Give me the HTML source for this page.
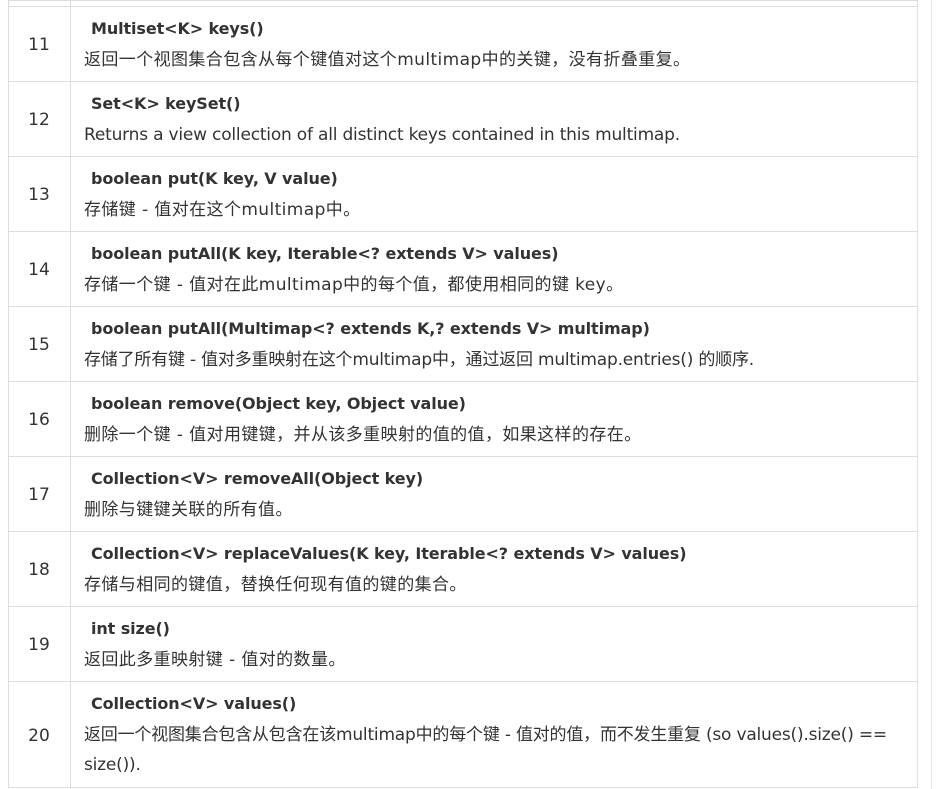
<!DOCTYPE html>
<html><head><meta charset="utf-8"><style>
body{margin:0;background:#fff;width:936px;height:789px;overflow:hidden;position:relative;font-family:"DejaVu Sans","Noto Sans CJK SC",sans-serif;color:#333;font-size:17px}
.r{position:absolute;left:8px;width:910px;border-top:1px solid #ddd;box-sizing:border-box}
.n{position:absolute;left:0;width:62px;text-align:center;top:0;bottom:0;display:flex;align-items:center;justify-content:center;font-size:17px;padding-top:2px;box-sizing:border-box}
.c{position:absolute;left:62px;right:0;top:0;bottom:0;border-left:1px solid #ddd;padding:7px 10px 0 13px;line-height:30.5px;letter-spacing:-0.2px}
.c b{padding-left:7px;color:#333;letter-spacing:-0.1px;font-size:16px}
.edge{position:absolute;left:8px;top:0;width:910px;height:788px;border-left:1px solid #ddd;border-right:1px solid #ddd;border-bottom:1px solid #ddd;box-sizing:border-box}
.sb{position:absolute;left:931px;top:0;width:1px;height:789px;background:#e5e5e5}
.k{letter-spacing:0.4px}
</style></head><body>
<div class="edge"></div><div class="sb"></div>
<div class="r" style="top:0;height:6px"><div class="c" style="padding:0"></div></div>
<div class="r" style="top:6px;height:75px"><div class="n">11</div><div class="c"><b>Multiset&lt;K&gt; keys()</b><br><span class="k">返回一个视图集合包含从每个键值对这个multimap中的关键，没有折叠重复。</span></div></div>
<div class="r" style="top:81px;height:75px"><div class="n">12</div><div class="c"><b>Set&lt;K&gt; keySet()</b><br>Returns a view collection of all distinct keys contained in this multimap.</div></div>
<div class="r" style="top:156px;height:75px"><div class="n">13</div><div class="c"><b>boolean put(K key, V value)</b><br><span class="k">存储键 - 值对在这个multimap中。</span></div></div>
<div class="r" style="top:231px;height:75px"><div class="n">14</div><div class="c"><b>boolean putAll(K key, Iterable&lt;? extends V&gt; values)</b><br><span class="k">存储一个键 - 值对在此multimap中的每个值，都使用相同的键 key。</span></div></div>
<div class="r" style="top:306px;height:75px"><div class="n">15</div><div class="c"><b>boolean putAll(Multimap&lt;? extends K,? extends V&gt; multimap)</b><br>存储了所有键 - 值对多重映射在这个multimap中，通过返回 multimap.entries() 的顺序.</div></div>
<div class="r" style="top:381px;height:75px"><div class="n">16</div><div class="c"><b>boolean remove(Object key, Object value)</b><br><span class="k">删除一个键 - 值对用键键，并从该多重映射的值的值，如果这样的存在。</span></div></div>
<div class="r" style="top:456px;height:75px"><div class="n">17</div><div class="c"><b>Collection&lt;V&gt; removeAll(Object key)</b><br><span class="k">删除与键键关联的所有值。</span></div></div>
<div class="r" style="top:531px;height:75px"><div class="n">18</div><div class="c"><b>Collection&lt;V&gt; replaceValues(K key, Iterable&lt;? extends V&gt; values)</b><br><span class="k">存储与相同的键值，替换任何现有值的键的集合。</span></div></div>
<div class="r" style="top:606px;height:75px"><div class="n">19</div><div class="c"><b>int size()</b><br><span class="k">返回此多重映射键 - 值对的数量。</span></div></div>
<div class="r" style="top:681px;height:107px"><div class="n">20</div><div class="c"><b>Collection&lt;V&gt; values()</b><br>返回一个视图集合包含从包含在该multimap中的每个键 - 值对的值，而不发生重复 (so values().size() ==<br>size()).</div></div>
</body></html>
